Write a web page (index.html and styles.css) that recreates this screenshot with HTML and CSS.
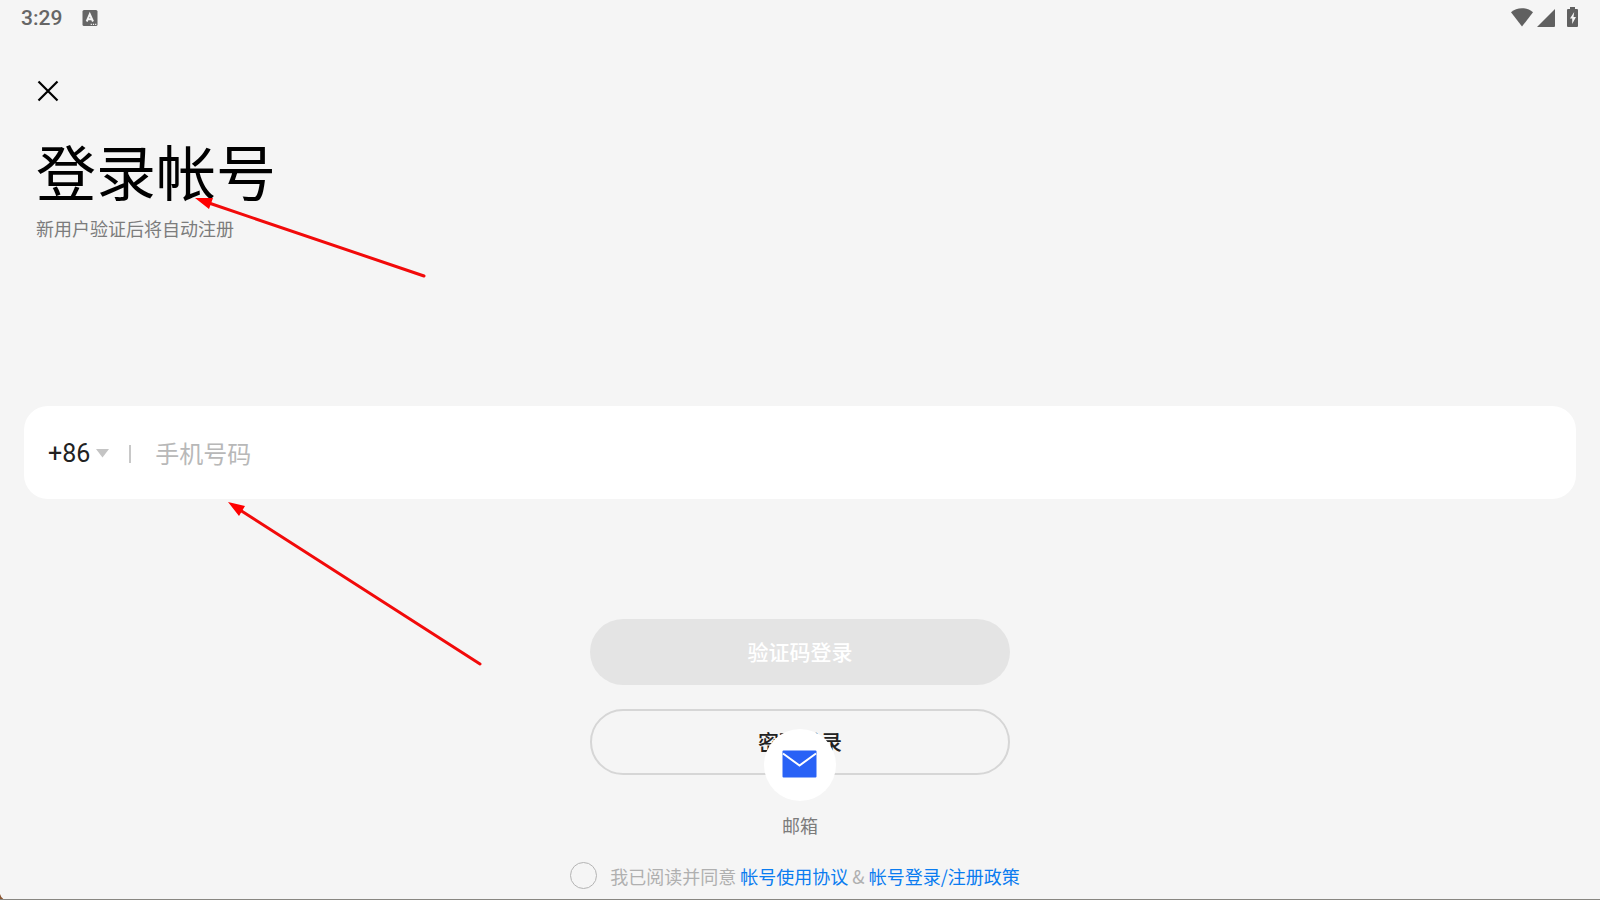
FILE: index.html
```html
<!DOCTYPE html>
<html lang="zh-CN">
<head>
  <meta charset="UTF-8">
  <meta name="viewport" content="width=device-width, initial-scale=1">
  <title>登录帐号</title>
  <link rel="stylesheet" href="styles.css">
</head>
<body>

  <header class="status-bar">
    <span class="status-time">3:29</span>
    <svg class="status-app" width="16" height="16" viewBox="0 0 16 16" aria-hidden="true">
      <rect x="0.5" y="0" width="15" height="16" rx="1.5" fill="#666"/>
      <path d="M4.7 11.5 7.8 4.2 11 11.5M5.8 9.2h4" fill="none" stroke="#f5f5f5" stroke-width="2"/>
      <path d="M8.7 14.3h1.2M10.9 14.3h1.2M13.1 14.3h1.2" stroke="#f5f5f5" stroke-width="1.2"/>
    </svg>
    <div class="status-icons">
      <svg width="22" height="19" viewBox="0 0 22 19" aria-hidden="true">
        <path d="M11 18.6 0 4.2C3 1.6 6.8 .2 11 .2s8 1.4 11 4z" fill="#606060"/>
      </svg>
      <svg width="18" height="19" viewBox="0 0 18 19" aria-hidden="true">
        <path d="M0 19 18 1v17a1 1 0 0 1-1 1z" fill="#606060"/>
      </svg>
      <svg class="status-battery" width="11" height="20" viewBox="0 0 11 20" aria-hidden="true">
        <path d="M3 0h5v2h2a1 1 0 0 1 1 1v16a1 1 0 0 1-1 1H1a1 1 0 0 1-1-1V3a1 1 0 0 1 1-1h2z" fill="#606060"/>
        <path d="M7.2 5 3 11.5h2.2V17l3.800-7H6.500z" fill="#f5f5f5"/>
      </svg>
    </div>
  </header>

  <main class="login">
    <button class="close" type="button" aria-label="关闭">
      <svg width="22" height="22" viewBox="0 0 22 22" aria-hidden="true">
        <path d="M1.5 1.5 20.5 20.5M20.5 1.5 1.5 20.5" stroke="#000" stroke-width="2.2"/>
      </svg>
    </button>

    <h1 class="title">登录帐号</h1>
    <p class="subtitle">新用户验证后将自动注册</p>

    <form class="login-form">
      <div class="phone-card">
        <button class="country" type="button" aria-label="国家/地区代码 +86">
          <span>+86</span>
          <svg width="13" height="9" viewBox="0 0 13 9" aria-hidden="true">
            <path d="M0 0h13L6.5 8.5z" fill="#c4c4c4"/>
          </svg>
        </button>
        <span class="divider"></span>
        <input class="phone" type="tel" placeholder="手机号码" aria-label="手机号码">
      </div>

      <div class="actions">
        <button class="btn btn-code" type="submit" disabled>验证码登录</button>
        <button class="btn btn-password" type="button">密码登录</button>
      </div>

      <button class="mail" type="button">
        <span class="mail-circle">
          <svg width="36" height="30" viewBox="0 0 36 30" aria-hidden="true">
            <rect x="0.5" y="0.5" width="34" height="27" rx="1" fill="#2962f6"/>
            <path d="M1 3.5 17.5 15.5 34 3.5" fill="none" stroke="#fff" stroke-width="2"/>
          </svg>
        </span>
        <span class="mail-label">邮箱</span>
      </button>

      <div class="terms">
        <input class="agree" type="checkbox" id="agree">
        <p class="terms-text"><label for="agree">我已阅读并同意</label> <a href="#">帐号使用协议</a> &amp; <a href="#">帐号登录/注册政策</a></p>
      </div>
    </form>
  </main>

  <!-- window edge -->
  <svg class="corner" width="5" height="6" viewBox="0 0 5 6" aria-hidden="true">
    <path d="M0 0Q1 4 5 6H0z" fill="#8a5632"/>
  </svg>

  <svg class="arrows" width="500" height="680" viewBox="0 0 500 680" aria-hidden="true">
    <path d="M206 202 424 276M240 510 480 664" stroke="#f20a0a" stroke-width="3" stroke-linecap="round"/>
    <path d="M195 198 213 198 209 209zM228 502 245 506 239 516z" fill="#f00"/>
  </svg>

</body>
</html>
```

FILE: styles.css
```css
* {
  box-sizing: border-box;
}

body {
  display: flex;
  position: relative;
  flex-direction: column;
  min-height: 100vh;
  margin: 0;
  background: #f5f5f5;
  border-bottom: 1px solid #888681;
  color: #000;
  font-family: "Noto Sans CJK SC", sans-serif;
  font-size: 18px;
  line-height: 24px;
}

button,
input {
  margin: 0;
  padding: 0;
  border: 0;
  background: none;
  color: inherit;
  font: inherit;
}

svg {
  display: block;
}

.status-bar {
  display: flex;
  align-items: center;
  height: 36px;
  padding: 0 22px 0 21px;
}

.status-time {
  color: #666;
  font-family: Roboto, sans-serif;
  font-size: 21px;
  font-weight: 500;
}

.status-app {
  margin-left: 20px;
}

.status-icons {
  display: flex;
  align-items: center;
  gap: 4px;
  margin-left: auto;
  padding-bottom: 2px;
}

.status-battery {
  margin-left: 8px;
}

.login {
  display: flex;
  flex: 1;
  flex-direction: column;
  padding: 44px 24px 8px;
}

.close {
  align-self: flex-start;
  margin-left: 13px;
}

.title {
  margin: 28px 12px 0;
  font-size: 60px;
  font-weight: 400;
  line-height: 80px;
}

.subtitle {
  margin: 6px 12px 0;
  color: #7c7c7c;
}

.login-form {
  display: flex;
  flex-direction: column;
  margin-top: 166px;
}

/* phone number */
.phone-card {
  display: flex;
  align-items: center;
  height: 93px;
  padding: 0 24px;
  border-radius: 24px;
  background: #fff;
}

.country {
  display: flex;
  align-items: center;
  gap: 6px;
  padding-top: 2px;
  color: #222;
  font-family: Roboto, sans-serif;
  font-size: 25px;
}

.divider {
  width: 2px;
  height: 18px;
  margin: 2px 24px 0 20px;
  background: #c8c8c8;
}

.phone {
  flex: 1;
  min-width: 0;
  height: 36px;
  outline: none;
  font-size: 24px;
}

.phone::placeholder {
  color: #b8b8b8;
  opacity: 1;
}

/* login buttons */
.actions {
  display: flex;
  flex-direction: column;
  gap: 24px;
  width: 100%;
  max-width: 420px;
  margin: 120px auto 0;
}

.btn {
  height: 66px;
  padding-bottom: 2px;
  border-radius: 33px;
  font-size: 21px;
  font-weight: 500;
}

.btn-code {
  background: #e4e4e4;
  color: #fff;
}

.btn-password {
  border: 2px solid #d6d6d6;
  color: #222;
}

/* sits over the lower half of the password button */
.mail {
  display: flex;
  position: relative;
  flex-direction: column;
  align-items: center;
  gap: 12px;
  align-self: center;
  margin-top: -46px;
}

.mail-circle {
  display: flex;
  align-items: center;
  justify-content: center;
  width: 72px;
  height: 72px;
  border-radius: 50%;
  background: #fff;
}

.mail-label {
  color: #7c7c7c;
}

/* agreement */
.terms {
  display: flex;
  align-items: center;
  justify-content: center;
  gap: 13px;
  margin-top: 25px;
  padding-right: 10px;
}

.agree {
  width: 27px;
  height: 27px;
  border: 1px solid #b4b4b4;
  border-radius: 50%;
  appearance: none;
}

.agree:checked {
  background: #0a78e6;
}

.terms-text {
  margin: 0;
  color: #b0b0b0;
}

.terms-text a {
  color: #0a7cf0;
  text-decoration: none;
}

.corner {
  position: absolute;
  bottom: -1px;
  left: 0;
}

.arrows {
  position: absolute;
  top: 0;
  left: 0;
  pointer-events: none;
}
```
